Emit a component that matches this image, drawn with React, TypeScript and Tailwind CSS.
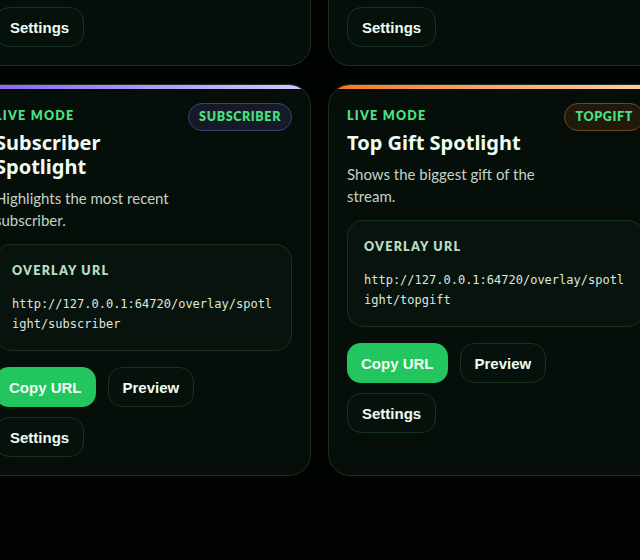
import React from "react";

type Overlay = {
  title: string;
  description: string;
  url: string;
  badge: string;
  bar: string;
  badgeStyle: string;
};

const overlays: Overlay[] = [
  {
    title: "Follower Spotlight",
    description: "Shows the most recent new follower of the stream.",
    url: "http://127.0.0.1:64720/overlay/spotlight/follower",
    badge: "FOLLOWER",
    bar: "bg-gradient-to-r from-[#06b6d4] to-[#a5f3fc]",
    badgeStyle: "bg-[#0d1c22] border-[#1f4b57]",
  },
  {
    title: "Like Spotlight",
    description: "Shows the viewer who sent the most likes.",
    url: "http://127.0.0.1:64720/overlay/spotlight/likes",
    badge: "LIKES",
    bar: "bg-gradient-to-r from-[#ec4899] to-[#fbcfe8]",
    badgeStyle: "bg-[#241020] border-[#5b2448]",
  },
  {
    title: "Subscriber Spotlight",
    description: "Highlights the most recent subscriber.",
    url: "http://127.0.0.1:64720/overlay/spotlight/subscriber",
    badge: "SUBSCRIBER",
    bar: "bg-gradient-to-r from-[#8b5cf6] to-[#d4c8fc]",
    badgeStyle: "bg-[#161a28] border-[#3d4170]",
  },
  {
    title: "Top Gift Spotlight",
    description: "Shows the biggest gift of the stream.",
    url: "http://127.0.0.1:64720/overlay/spotlight/topgift",
    badge: "TOPGIFT",
    bar: "bg-gradient-to-r from-[#f97316] to-[#fdd0a8]",
    badgeStyle: "bg-[#22180c] border-[#6a4a1e]",
  },
];

const lato = "font-['Lato','Noto_Sans',sans-serif]";
const noto = "font-['Noto_Sans','Open_Sans',sans-serif]";
const btn = "font-['Liberation_Sans',Arial,sans-serif] text-[15px] font-bold h-10 px-[14px] rounded-[14px] leading-none";

function OverlayCard({ o }: { o: Overlay }) {
  return (
    <div className="flex flex-col rounded-[22px] border border-[#173320] bg-[#060e09] overflow-hidden">
      <div className={`h-1 shrink-0 ${o.bar}`} />
      <div className="flex flex-col px-[18px] pt-[14px] pb-[18px]">
        <div className="flex items-start justify-between gap-3">
          <div className="flex flex-col min-w-0">
            <div className={`${lato} mt-[5px] text-[12.5px] leading-4 font-extrabold tracking-[0.1em] text-[#4ade80]`}>
              LIVE MODE
            </div>
            <div className={`${noto} mt-[7px] text-[20px] leading-6 font-bold text-[#effdf3]`}>
              {o.title}
            </div>
            <div className={`${lato} mt-[8px] text-[15px] leading-[22px] text-[#c2d3c7]`}>
              {o.description}
            </div>
          </div>
          <div
            className={`${lato} shrink-0 h-7 px-[10px] flex items-center rounded-full border text-[12.5px] font-extrabold tracking-[0.05em] text-[#4ade80] ${o.badgeStyle}`}
          >
            {o.badge}
          </div>
        </div>

        <div className="mt-[13px] rounded-[16px] border border-[#173320] bg-[#09130d] px-4 pt-[18px] pb-[16px]">
          <div className={`${lato} text-[12.5px] leading-4 font-extrabold tracking-[0.1em] text-[#b9dcc2]`}>
            OVERLAY URL
          </div>
          <div className="mt-[15px] font-['DejaVu_Sans_Mono',monospace] text-[12px] leading-5 text-[#dbe8de] break-all">
            {o.url}
          </div>
        </div>

        <div className="mt-4 flex flex-wrap gap-x-3 gap-y-[10px]">
          <button className={`${btn} bg-[#22c55e] text-[#f0fdf4]`}>Copy URL</button>
          <button className={`${btn} border border-[#173320] bg-[#07110b] text-[#effdf3]`}>Preview</button>
          <button className={`${btn} border border-[#173320] bg-[#07110b] text-[#effdf3]`}>Settings</button>
        </div>
      </div>
    </div>
  );
}

export default function App() {
  return (
    <div className="w-[640px] h-[560px] overflow-hidden bg-[#010301]">
      <div className="ml-[-24px] mt-[-302px] grid grid-cols-[335px_335px] gap-x-[17px] gap-y-[18px]">
        {overlays.map((o) => (
          <OverlayCard key={o.badge} o={o} />
        ))}
      </div>
    </div>
  );
}
